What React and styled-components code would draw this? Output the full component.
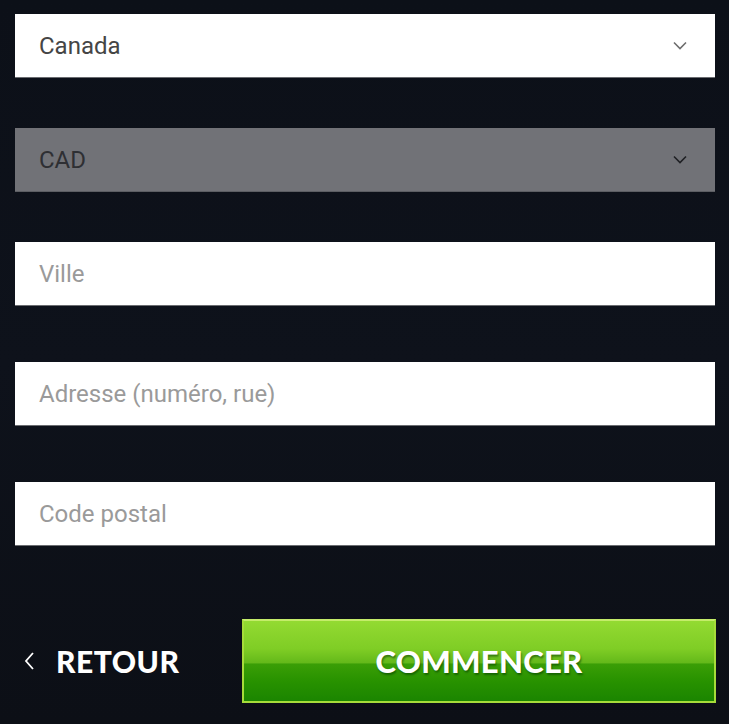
import React from "react";
import styled, { createGlobalStyle } from "styled-components";

const Global = createGlobalStyle`
  html, body { margin: 0; padding: 0; background: #0d1119; }
  body { font-family: Roboto, "Noto Sans", sans-serif; }
`;

const Page = styled.div`
  width: 729px;
  height: 724px;
  box-sizing: border-box;
  padding: 14px 14px 0 15px;
  background: linear-gradient(180deg, #0c1018 0%, #0e121b 50%, #0c0f16 100%);
  display: flex;
  flex-direction: column;
`;

const Field = styled.div`
  height: 64px;
  box-sizing: border-box;
  margin-top: ${(p) => p.$gap || 0}px;
  background: ${(p) => (p.$disabled ? "#717277" : "#ffffff")};
  border-bottom: 1px solid ${(p) => (p.$disabled ? "#5c5e63" : "#6a6c70")};
  display: flex;
  align-items: center;
  justify-content: space-between;
  padding: 0 28px 0 24px;
  font-size: 24px;
  color: ${(p) => (p.$placeholder ? "#9a9a9a" : p.$disabled ? "#2e2f33" : "#454545")};
`;

const Chevron = ({ color }) => (
  <svg width="14" height="9" viewBox="0 0 14 9" fill="none">
    <path d="M1 1.5 L7 7.5 L13 1.5" stroke={color} strokeWidth="1.6" />
  </svg>
);

const Footer = styled.div`
  margin-top: 73px;
  margin-right: -1px;
  display: flex;
  align-items: center;
`;

const Back = styled.div`
  flex: 1;
  display: flex;
  align-items: center;
  gap: 22px;
  padding-left: 9px;
  color: #ffffff;
  font-family: Lato, sans-serif;
  font-weight: 900;
  font-size: 30px;
  letter-spacing: 0.5px;
`;

const Start = styled.div`
  width: 474px;
  height: 84px;
  box-sizing: border-box;
  border: 2px solid #a6dc3a;
  border-top-color: #c4ec6a;
  background: linear-gradient(
    180deg,
    #93da32 0%,
    #7fcd25 35%,
    #64b91a 52%,
    #3a9e06 54%,
    #289200 75%,
    #1b8500 100%
  );
  display: flex;
  align-items: center;
  justify-content: center;
  color: #ffffff;
  font-family: Lato, sans-serif;
  font-weight: 900;
  font-size: 31px;
  letter-spacing: 0.3px;
  text-shadow: 1px 2px 2px rgba(0, 60, 0, 0.55);
`;

export default function App() {
  return (
    <>
      <Global />
      <Page>
        <Field>
          <span>Canada</span>
          <Chevron color="#6d6d6d" />
        </Field>
        <Field $gap={50} $disabled>
          <span>CAD</span>
          <Chevron color="#1f2024" />
        </Field>
        <Field $gap={50} $placeholder>
          <span>Ville</span>
        </Field>
        <Field $gap={56} $placeholder>
          <span>Adresse (numéro, rue)</span>
        </Field>
        <Field $gap={56} $placeholder>
          <span>Code postal</span>
        </Field>
        <Footer>
          <Back>
            <svg width="10" height="18" viewBox="0 0 10 18" fill="none">
              <path d="M9 1 L2 9 L9 17" stroke="#ffffff" strokeWidth="1.8" />
            </svg>
            <span>RETOUR</span>
          </Back>
          <Start>COMMENCER</Start>
        </Footer>
      </Page>
    </>
  );
}
